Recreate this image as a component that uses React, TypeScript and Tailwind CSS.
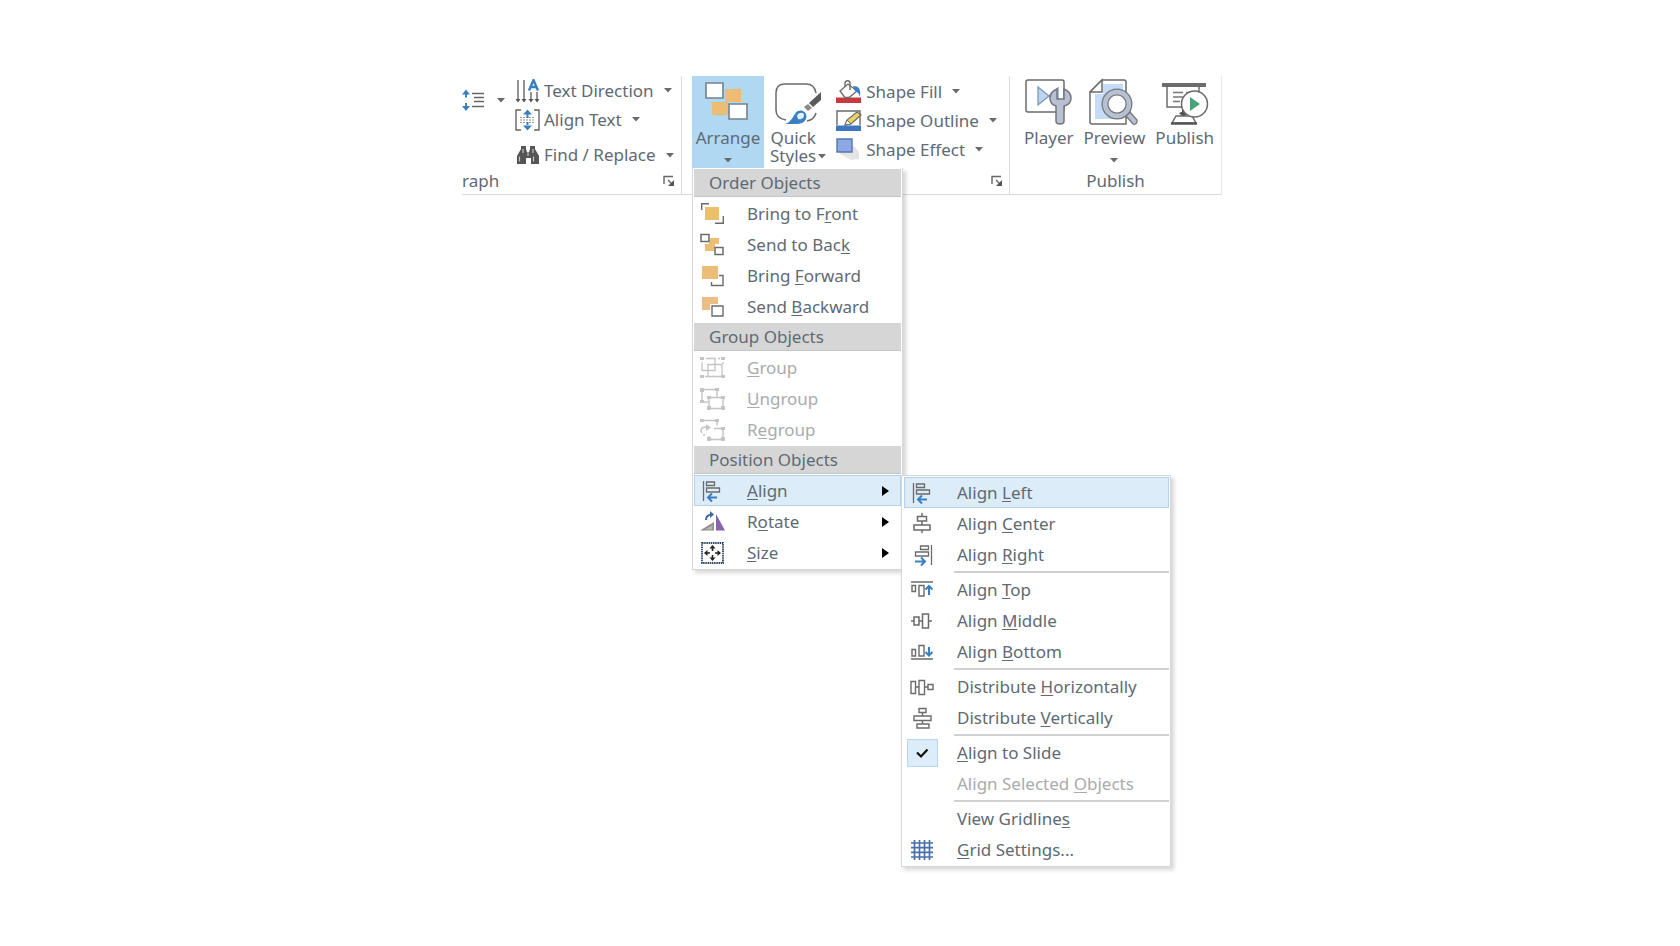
import React, { useState } from 'react';

type IconProps = { children: React.ReactNode; w?: number; h?: number };

const Svg = ({ children, w = 24, h = 24 }: IconProps) => (
    <svg width={w} height={h} viewBox={`0 0 ${w} ${h}`} fill="none" className="shrink-0" aria-hidden="true">
        {children}
    </svg>
);

const GRAY = '#6b6b6b';
const BLUE = '#3a7fc1';
const TAN = '#edbd74';
const OFF = '#c4c4c4';

const Caret = () => (
    <svg width="8" height="5" viewBox="0 0 8 5" className="shrink-0" aria-hidden="true">
        <path d="M0 0h8L4 4.5z" fill="#6a6a6a" />
    </svg>
);

// ---- ribbon icons ----
const LineSpacingIcon = () => (
    <Svg w={23} h={24}>
        <path d="M0 6.5 4 1.500l4 5zM3 6h2v3.500H3zM0 18l4 5 4-5zM3 15h2v3H3z" fill={BLUE} />
        <path d="M10 5.500h12M12 9.500h10M12 13.500h10M10 18.500h12" stroke="#666" strokeWidth="1.500" />
    </Svg>
);

const TextDirectionIcon = () => (
    <Svg w={25} h={24}>
        <path d="M3 1v20M9 1v20M16 13v8M22 13v8" stroke="#666" strokeWidth="1.400" />
        <path d="M.5 20h5L3 23.500zM6.500 20h5L9 23.500zM13.500 20h5L16 23.500zM19.500 20h5L22 23.500z" fill="#555" />
        <path d="M14 11.500 18.500 1l4.500 10.500M15.500 8h6" stroke={BLUE} strokeWidth="2.400" />
    </Svg>
);

const AlignTextIcon = () => (
    <Svg w={25} h={24}>
        <path d="M6 2H1v20h5M19 2h5v20h-5" stroke="#666" strokeWidth="1.400" />
        <path d="M5 9.500h15M5 12h15M5 14.500h15" stroke="#999" strokeDasharray="2 1" />
        <path d="M8 6.500l4.500-5 4.500 5zM11.500 6h2v4h-2zM8 17.500l4.500 5 4.500-5zM11.500 14h2v4h-2z" fill={BLUE} />
    </Svg>
);

const BinocularsIcon = () => (
    <Svg w={25} h={20}>
        <path d="M6 1h5v3l1 3h2l1-3V1h5v3l4 7v8h-8v-6h-5v6H2v-8l4-7z" fill="#555" />
        <path d="M4.500 11.500v5M8 4v4M18 4v4M18.500 11.500v5M13 7v4" stroke="#c4c4c4" strokeWidth="1.200" />
    </Svg>
);

const ArrangeIcon = () => (
    <Svg w={46} h={40}>
        <path d="M20 7h16v13H20zM7 20h16v13H7z" fill={TAN} />
        <path d="M1 1h17v15H1zM24 22h18v15H24z" fill="#fff" stroke="#76818a" strokeWidth="1.600" />
    </Svg>
);

const QuickStylesIcon = () => (
    <Svg w={48} h={44}>
        <path d="M12 38C5 37 2 33 2 28V11C2 5 5 2 11 2h21c6 0 9 3 10 9M42 31c-1 4-4 7-9 8" stroke={GRAY} strokeWidth="1.500" />
        <path d="M47 10v8l-8 7-4-4z" fill="#5a5a5a" />
        <path d="m34 22 4 4-4 3-4-4z" fill="#8a8a8a" />
        <path d="M11 42c6-2 7-6 10-10 3-5 9-4 11 0 2 6-3 10-9 10z" fill={BLUE} />
        <path d="M23 34c1-4 7-4 7-1 0 4-4 5-6 4z" fill="#e3eefa" />
    </Svg>
);

const ShapeFillIcon = () => (
    <Svg w={26} h={24}>
        <path d="M0 17.500h25V23H0z" fill="#c53b3f" />
        <path d="m4 11 8-7 9 7-8 6.500H9z" fill="#fff" stroke={GRAY} strokeWidth="1.300" />
        <path d="M9 7V3c0-3 5-3 5 0v7" stroke={GRAY} strokeWidth="1.400" />
        <path d="M17 6c6 0 8 3 7 11-1-3-2-5-5-6z" fill={BLUE} />
    </Svg>
);

const ShapeOutlineIcon = () => (
    <Svg w={26} h={24}>
        <path d="M1 16V2h23v14" stroke={GRAY} strokeWidth="1.400" />
        <path d="M0 16.500h25V22H0z" fill="#3f76bf" />
        <path d="m9 16 2-5 10-8 4 3-10 9z" fill="#ecd25f" stroke={GRAY} strokeWidth="1.200" />
        <path d="m9 16 2-5 4 4z" fill="#fff" stroke={GRAY} />
    </Svg>
);

const ShapeEffectIcon = () => (
    <Svg w={26} h={24}>
        <path d="M16 6l7 8v7l-8 1-12-7z" fill="#e3e4e4" />
        <path d="M1 1h15v13H1z" fill="#8ea9e2" stroke="#5477b5" strokeWidth="1.400" />
    </Svg>
);

const PlayerIcon = () => (
    <Svg w={48} h={48}>
        <rect x="1" y="2" width="38" height="32" rx="2" fill="#fff" stroke={GRAY} strokeWidth="1.500" />
        <path d="m13 9 11 9-11 9zM24 18l9-8v16z" fill="#bdd5f3" stroke="#7a97bd" strokeWidth="1.300" />
        <path d="M32 11c-5 2-7 5-7 9 0 4 2 7 6 8v15c0 4 8 4 8 0V28c4-1 7-4 7-8 0-4-2-7-7-9v10h-7z" fill="#b7c1d2" stroke="#74777e" strokeWidth="1.500" />
    </Svg>
);

const PreviewIcon = () => (
    <Svg w={50} h={48}>
        <path d="M13 2h22c1 0 2 1 2 2v42H3c-1 0-2-1-2-2V14z" fill="#fff" stroke={GRAY} strokeWidth="1.500" />
        <path d="M14 6h20v35H6V16h8z" fill="#c6dcf6" />
        <path d="M1 14 13 2v12z" fill="#fff" stroke={GRAY} strokeWidth="1.500" />
        <path d="m37 38 4-4 7 8c1 3-2 5-4 4z" fill="#b7c1d2" stroke="#74777e" strokeWidth="1.300" />
        <circle cx="28" cy="26" r="12" fill="#fff" stroke="#74777e" strokeWidth="7" />
        <circle cx="28" cy="26" r="12" stroke="#b7c1d2" strokeWidth="4.500" />
    </Svg>
);

const PublishIcon = () => (
    <Svg w={48} h={48}>
        <path d="M1 5h44v4H1z" fill="#6b6b6b" />
        <path d="M6 9v20h32V9" fill="#fff" stroke={GRAY} strokeWidth="1.500" />
        <path d="M12 14.500h10M25 14.500h8M12 19h10M12 23.500h7" stroke="#777" strokeWidth="1.400" />
        <path d="M22.500 29v8" stroke="#444" strokeWidth="3" />
        <path d="M15 38h16l4 7H11z" fill="#fff" stroke={GRAY} strokeWidth="1.500" />
        <path d="M10 45.500h26" stroke="#555" strokeWidth="2.500" />
        <path d="M18 35c3 4 6 4 9 0l-4-2z" fill="#555" />
        <circle cx="33.500" cy="26" r="13" fill="#fff" stroke={GRAY} strokeWidth="1.500" />
        <path d="m29 19 10 7-10 7z" fill="#4aa27b" />
    </Svg>
);

const LauncherIcon = () => (
    <Svg w={12} h={12}>
        <path d="M1 9V1.500h9M5 5l5 5" stroke="#666" strokeWidth="1.400" />
        <path d="M11 5v6H5z" fill="#555" />
    </Svg>
);

// ---- menu icons ----
const BringToFrontIcon = () => (
    <Svg>
        <path d="M1.700 8V1.700H9M23.300 14v7.300H15" stroke={GRAY} strokeWidth="1.400" />
        <path d="M5 5h14v13H5z" fill="#ecc06a" />
    </Svg>
);

const SendToBackIcon = () => (
    <Svg>
        <path d="M10 5h9v6h-9zM5 11h9v7H5z" fill={TAN} />
        <path d="M9 9h6v6H9z" fill={TAN} />
        <path d="M1 1.500h8v7H1zM15 14.500h8v7h-8z" fill="#fff" stroke={GRAY} strokeWidth="1.500" />
    </Svg>
);

const BringForwardIcon = () => (
    <Svg>
        <path d="M19 11.500h4v10H11.500V18" stroke={GRAY} strokeWidth="1.400" />
        <path d="M2 2h16v13H2z" fill="#ecbd78" />
    </Svg>
);

const SendBackwardIcon = () => (
    <Svg>
        <path d="M2 2h16v13H2z" fill="#ecbd84" />
        <path d="M10 9h14v13H10z" fill="#fff" />
        <path d="M12 11h11v10H12z" stroke={GRAY} strokeWidth="1.400" />
    </Svg>
);

const GroupIcon = () => (
    <Svg w={25}>
        <path d="M6 2.500h9v12H2V6M8 8.500h14v12H8zM18 2.500h2M23 6v2M5 20.500h3" stroke={OFF} strokeWidth="1.300" />
        <path d="M0 1h4v3H0zM21 1h4v3h-4zM0 19h4v3H0zM21 19h4v3h-4z" fill={OFF} />
    </Svg>
);

const UngroupIcon = () => (
    <Svg w={25}>
        <path d="M2 2.500h15v7M2 3v12h6M9 10.500h14v11H9z" stroke={OFF} strokeWidth="1.400" />
        <path d="M0 1h4v4H0zM15 1h4v3h-4zM0 13h4v3H0zM7 9h4v3H7zM21 9h4v3h-4zM7 19h4v4H7zM21 19h4v4h-4z" fill={OFF} />
    </Svg>
);

const RegroupIcon = () => (
    <Svg w={25}>
        <path d="M2 2.500h15v5M14 10.500h9v11H9V18M2 15c-2-3-1-6 4-6M3 17h2" stroke={OFF} strokeWidth="1.400" />
        <path d="m6 6 5 3.500L6 13zM0 1h4v3H0zM15 1h4v3h-4zM21 9h4v3h-4zM7 19h4v4H7zM21 19h4v4h-4z" fill={OFF} />
    </Svg>
);

const AlignLeftIcon = () => (
    <Svg>
        <path d="M3.500 2v20M6.500 3h8v3.500h-8zM6.500 9h13v4h-13z" stroke={GRAY} strokeWidth="1.300" />
        <path d="M17 18.500H8.500M12 14.500l-4 4 4 4" stroke={BLUE} strokeWidth="2" />
    </Svg>
);

const AlignCenterIcon = () => (
    <Svg>
        <path d="M12 1v3M12 9v4M12 18v3M7.500 4.500h9V9h-9zM4 13h16v5H4z" stroke={GRAY} strokeWidth="1.500" />
    </Svg>
);

const AlignRightIcon = () => (
    <Svg>
        <path d="M21.500 2v20M10.500 3h8v3.500h-8zM5.500 9h13v4h-13z" stroke={GRAY} strokeWidth="1.300" />
        <path d="M5 18.500h10M11 14.500l4 4-4 4" stroke={BLUE} strokeWidth="2" />
    </Svg>
);

const AlignTopIcon = () => (
    <Svg>
        <path d="M1 4h22M2 7.500h3.500v6H2zM9 7.500h5V18H9z" stroke={GRAY} strokeWidth="1.400" />
        <path d="M19 17V8M15.500 11.500 19 8l3.500 3.500" stroke={BLUE} strokeWidth="2" />
    </Svg>
);

const AlignMiddleIcon = () => (
    <Svg>
        <path d="M1 12h2.500M9 12h3M19 12h3M4 8h5v8H4zM12.500 5h6v14h-6z" stroke={GRAY} strokeWidth="1.500" />
    </Svg>
);

const AlignBottomIcon = () => (
    <Svg>
        <path d="M1 19h22M2 9.500h3.500V16H2zM9 5.500h5V16H9z" stroke={GRAY} strokeWidth="1.400" />
        <path d="M19 7v8.500M15.500 12l3.500 3.500 3.500-3.500" stroke={BLUE} strokeWidth="2" />
    </Svg>
);

const DistributeHIcon = () => (
    <Svg>
        <path d="M1 6.500h4.500v12H1zM9 5.500h5.500v14H9zM18 9.500h5v5h-5zM6 12h3M15 12h3" stroke={GRAY} strokeWidth="1.400" />
    </Svg>
);

const DistributeVIcon = () => (
    <Svg>
        <path d="M9 2.500h7v4H9zM4 10h17v4.500H4zM7 18h12v4H7zM12.500 6.500V10M12.500 14.500V18" stroke={GRAY} strokeWidth="1.400" />
    </Svg>
);

const RotateIcon = () => (
    <Svg w={26}>
        <path d="M0 20.500 14 12v8.500z" fill="#8c8c8c" />
        <path d="M5 19.500 12.500 15v4.500z" fill="#b5b5b5" />
        <path d="M16 4v16.500h9z" fill="#8765ab" />
        <path d="M6 10c0-4 2-5.500 6-5.500" stroke="#3b69a8" strokeWidth="2" />
        <path d="M10 1l4 3.500L10 8z" fill="#3b69a8" />
    </Svg>
);

const SizeIcon = () => (
    <Svg w={25}>
        <rect x="2" y="2" width="21" height="20" stroke="#2f4668" strokeWidth="1.800" strokeDasharray="1.500 .7" />
        <path d="M12.500 4 9.500 7.500h6zM12.500 20l-3-3.500h6zM4 12l3.500-3v6zM21 12l-3.500-3v6z" fill="#222" />
        <path d="M12.500 6v4M12.500 14v4M6 12h4M15 12h4" stroke="#222" strokeWidth="1.600" />
    </Svg>
);

const GridIcon = () => (
    <Svg>
        <path d="M4.500 2v20M9.500 2v20M14.500 2v20M19.500 2v20M1 5h22M1 9.700h22M1 14.300h22M1 19h22" stroke="#4a6fae" strokeWidth="1.700" />
    </Svg>
);

// The letter after "&" is the access key
const AccessLabel = ({ text }: { text: string }) => {
    const i = text.indexOf('&');
    if (i < 0) return <span>{text}</span>;
    return (
        <span className="whitespace-pre">
            {text.slice(0, i)}
            <span className="underline decoration-1 underline-offset-2">{text[i + 1]}</span>
            {text.slice(i + 2)}
        </span>
    );
};

type ItemProps = {
    label: string;
    icon?: React.ReactNode;
    disabled?: boolean;
    active?: boolean;
    arrow?: boolean;
    onClick?: () => void;
};

const MenuItem = ({ label, icon, disabled, active, arrow, onClick }: ItemProps) => (
    <button
        role="menuitem"
        disabled={disabled}
        onClick={onClick}
        className={`flex h-[31px] w-full items-center border pr-[11px] text-left ${active ? 'border-[#b3d3ec] bg-[#dcecf9]' : 'border-transparent'} ${disabled ? 'text-[#a9abad]' : ''}`}
    >
        <span className="flex w-[52px] shrink-0 pl-[5px]">{icon}</span>
        <AccessLabel text={label} />
        {arrow && (
            <svg width="7" height="10" viewBox="0 0 7 10" className="ml-auto" aria-hidden="true">
                <path d="M0 0l7 5-7 5z" fill="#000" />
            </svg>
        )}
    </button>
);

const MenuHeader = ({ children }: { children: string }) => (
    <div className="my-px flex h-7 items-center border-b border-[#c6c6c6] bg-[#d6d6d6] pl-[15px]">{children}</div>
);

const Separator = () => <div role="separator" className="my-px ml-[50px] h-0.5 bg-[#d0d0d0]" />;

const AlignMenu = () => {
    const [toSlide, setToSlide] = useState(true);

    return (
        <div role="menu" aria-label="Align" className="absolute top-0 left-full w-[270px] border border-[#d4d8dc] bg-white p-px pl-0.5 shadow-[3px_3px_4px_rgba(0,0,0,0.16)]">
            <MenuItem label="Align &Left" icon={<AlignLeftIcon />} active />
            <MenuItem label="Align &Center" icon={<AlignCenterIcon />} />
            <MenuItem label="Align &Right" icon={<AlignRightIcon />} />
            <Separator />
            <MenuItem label="Align &Top" icon={<AlignTopIcon />} />
            <MenuItem label="Align &Middle" icon={<AlignMiddleIcon />} />
            <MenuItem label="Align &Bottom" icon={<AlignBottomIcon />} />
            <Separator />
            <MenuItem label="Distribute &Horizontally" icon={<DistributeHIcon />} />
            <MenuItem label="Distribute &Vertically" icon={<DistributeVIcon />} />
            <Separator />
            <label className="flex h-[31px] items-center">
                <span className="grid w-[53px] shrink-0 items-center pl-[3px]">
                    <input
                        type="checkbox"
                        checked={toSlide}
                        onChange={e => setToSlide(e.target.checked)}
                        className="col-start-1 row-start-1 h-7 w-[31px] appearance-none border border-transparent checked:border-[#b9d7ee] checked:bg-[#dcecf9]"
                    />
                    {toSlide && (
                        <svg width="31" height="12" viewBox="0 0 31 12" fill="none" className="pointer-events-none col-start-1 row-start-1" aria-hidden="true">
                            <path d="m10 5.500 4 4 6.500-7" stroke="#111" strokeWidth="2.200" />
                        </svg>
                    )}
                </span>
                <AccessLabel text="&Align to Slide" />
            </label>
            <MenuItem label="Align Selected &Objects" disabled />
            <Separator />
            <MenuItem label="View Gridline&s" />
            <MenuItem label="&Grid Settings..." icon={<GridIcon />} />
        </div>
    );
};

const ArrangeMenu = () => {
    const [alignOpen, setAlignOpen] = useState(true);

    return (
        <div role="menu" aria-label="Arrange" className="absolute top-full left-0 z-10 w-[211px] border border-t-0 border-[#d4d8dc] bg-white px-px pb-px shadow-[3px_3px_4px_rgba(0,0,0,0.16)]">
            <MenuHeader>Order Objects</MenuHeader>
            <MenuItem label="Bring to F&ront" icon={<BringToFrontIcon />} />
            <MenuItem label="Send to Bac&k" icon={<SendToBackIcon />} />
            <MenuItem label="Bring &Forward" icon={<BringForwardIcon />} />
            <MenuItem label="Send &Backward" icon={<SendBackwardIcon />} />
            <MenuHeader>Group Objects</MenuHeader>
            <MenuItem label="&Group" icon={<GroupIcon />} disabled />
            <MenuItem label="&Ungroup" icon={<UngroupIcon />} disabled />
            <MenuItem label="R&egroup" icon={<RegroupIcon />} disabled />
            <MenuHeader>Position Objects</MenuHeader>
            <div className="relative">
                <MenuItem label="&Align" icon={<AlignLeftIcon />} active={alignOpen} arrow onClick={() => setAlignOpen(!alignOpen)} />
                {alignOpen && <AlignMenu />}
            </div>
            <MenuItem label="R&otate" icon={<RotateIcon />} arrow />
            <MenuItem label="&Size" icon={<SizeIcon />} arrow />
        </div>
    );
};

const SmallButton = ({ icon, label }: { icon: React.ReactNode; label: string }) => (
    <button className="flex items-center whitespace-nowrap">
        {icon}
        <span className="mr-2.5 ml-1">{label}</span>
        <Caret />
    </button>
);

const BigButton = ({ icon, label, caret }: { icon: React.ReactNode; label: string; caret?: boolean }) => (
    <button className="flex flex-col items-center pt-0.5">
        {icon}
        <span className="leading-6">{label}</span>
        {caret && <span className="mt-2"><Caret /></span>}
    </button>
);

const App: React.FC = () => {
    const [arrangeOpen, setArrangeOpen] = useState(true);

    return (
        <main className="flex min-h-screen justify-center bg-white pt-[76px] pr-4 pl-5 font-['Noto_Sans',sans-serif] text-[17px] leading-5 text-[#606a73]">
            <div className="flex h-[119px] w-full max-w-[760px] border-b border-[#d9d9d9]">
                <section aria-label="Paragraph" className="flex w-[220px] shrink-0 flex-col border-r border-[#dcdcdc]">
                    <div className="flex h-[94px]">
                        <button aria-label="Line spacing" className="flex h-12 items-center gap-3">
                            <LineSpacingIcon />
                            <Caret />
                        </button>
                        <div className="ml-2.5 flex flex-col items-start">
                            <div className="flex h-[30px]"><SmallButton icon={<TextDirectionIcon />} label="Text Direction" /></div>
                            <div className="flex h-[30px]"><SmallButton icon={<AlignTextIcon />} label="Align Text" /></div>
                            <div className="mt-1.5 flex h-[30px]"><SmallButton icon={<BinocularsIcon />} label="Find / Replace" /></div>
                        </div>
                    </div>
                    <div className="flex h-[22px] items-center justify-between pr-1.5">
                        <span>raph</span>
                        <button aria-label="Paragraph settings"><LauncherIcon /></button>
                    </div>
                </section>

                <section aria-label="Drawing" className="flex w-[328px] shrink-0 flex-col border-r border-[#dcdcdc]">
                    <div className="flex h-[94px] pl-2.5">
                        <div className="relative h-[92px]">
                            <button
                                onClick={() => setArrangeOpen(!arrangeOpen)}
                                className={`flex h-full w-[72px] flex-col items-center pt-1.5 ${arrangeOpen ? 'bg-[#b0d8f3]' : ''}`}
                            >
                                <ArrangeIcon />
                                <span className="mt-1 leading-6">Arrange</span>
                                <span className="mt-2"><Caret /></span>
                            </button>
                            {arrangeOpen && <ArrangeMenu />}
                        </div>
                        <button className="ml-1.5 flex flex-col items-center pt-1.5 leading-[18px]">
                            <QuickStylesIcon />
                            <span className="mt-[3px] flex items-end gap-0.5">
                                <span>Quick<br />Styles</span>
                                <span className="pb-1.5"><Caret /></span>
                            </span>
                        </button>
                        <div className="ml-2.5 flex flex-col items-start pt-px">
                            <div className="flex h-[29px]"><SmallButton icon={<ShapeFillIcon />} label="Shape Fill" /></div>
                            <div className="flex h-[29px]"><SmallButton icon={<ShapeOutlineIcon />} label="Shape Outline" /></div>
                            <div className="flex h-[29px]"><SmallButton icon={<ShapeEffectIcon />} label="Shape Effect" /></div>
                        </div>
                    </div>
                    <div className="flex h-[22px] items-center justify-end pr-1.5">
                        <button aria-label="Drawing settings"><LauncherIcon /></button>
                    </div>
                </section>

                <section aria-label="Publish" className="flex flex-1 flex-col border-r border-[#e8e8e8]">
                    <div className="flex h-[94px] items-start gap-2.5 pl-3.5">
                        <BigButton icon={<PlayerIcon />} label="Player" />
                        <BigButton icon={<PreviewIcon />} label="Preview" caret />
                        <BigButton icon={<PublishIcon />} label="Publish" />
                    </div>
                    <div className="flex h-[22px] items-center justify-center">Publish</div>
                </section>
            </div>
        </main>
    );
};

export default App;
